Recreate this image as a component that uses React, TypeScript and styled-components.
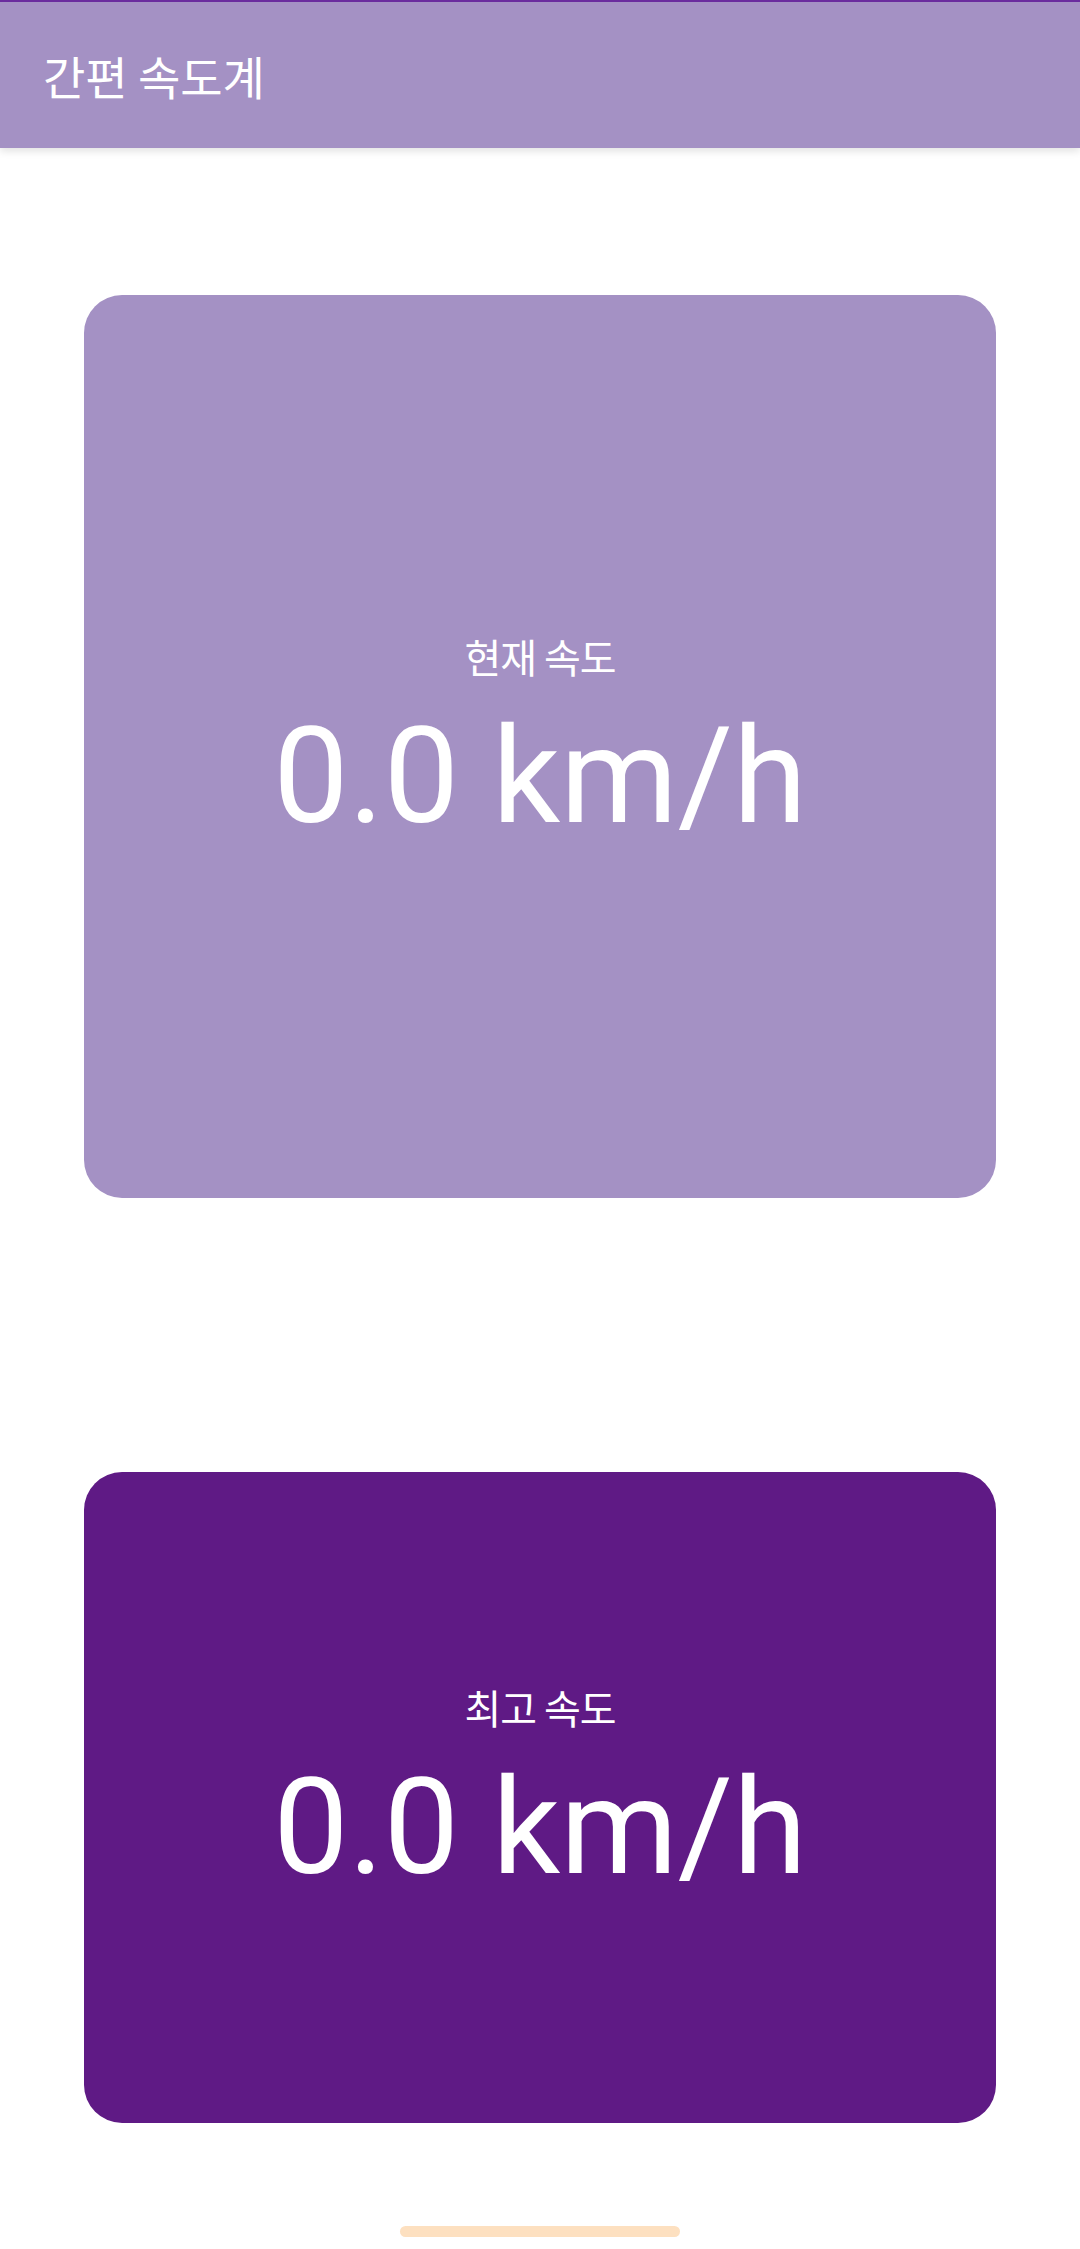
import React from "react";
import styled, { createGlobalStyle } from "styled-components";

const GlobalStyle = createGlobalStyle`
  html, body {
    margin: 0;
    padding: 0;
    background: #ffffff;
  }
  * {
    box-sizing: border-box;
  }
`;

const Screen = styled.div`
  width: 1080px;
  min-height: 2249px;
  display: flex;
  flex-direction: column;
  background: #ffffff;
  font-family: Roboto, "Noto Sans CJK KR", sans-serif;
`;

const AppBar = styled.header`
  height: 148px;
  display: flex;
  align-items: center;
  padding-left: 43px;
  background: #a491c4;
  border-top: 2px solid #6a2c9e;
  box-shadow: 0 3px 8px rgba(0, 0, 0, 0.12);
  position: relative;
  z-index: 1;
`;

const Title = styled.h1`
  margin: 0;
  color: #ffffff;
  font-family: "Noto Sans CJK KR", sans-serif;
  font-weight: 400;
  font-size: 46px;
  letter-spacing: 0;
  line-height: 1;
`;

const Content = styled.main`
  display: flex;
  flex-direction: column;
  gap: 274px;
  padding: 147px 84px 0;
`;

const SpeedCard = styled.section<{ $bg: string; $height: number }>`
  height: ${({ $height }) => $height}px;
  background: ${({ $bg }) => $bg};
  border-radius: 38px;
  display: flex;
  flex-direction: column;
  align-items: center;
  justify-content: center;
  color: #ffffff;
  padding-bottom: 10px;
`;

const Label = styled.div`
  font-family: "Noto Sans CJK KR", sans-serif;
  font-size: 40px;
  letter-spacing: -1px;
  line-height: 48px;
`;

const Value = styled.div`
  font-family: Roboto, sans-serif;
  font-size: 134px;
  line-height: 150px;
  margin-top: 22px;
  white-space: nowrap;
`;

const HomeIndicator = styled.div`
  width: 280px;
  height: 11px;
  border-radius: 6px;
  background: #fde0c0;
  margin: 103px auto 0;
`;

const cards = [
  { label: "현재 속도", value: "0.0 km/h", bg: "#a491c4", height: 903 },
  { label: "최고 속도", value: "0.0 km/h", bg: "#5f1a85", height: 651 },
];

const App: React.FC = () => {
  return (
    <>
      <GlobalStyle />
      <Screen>
        <AppBar>
          <Title>간편 속도계</Title>
        </AppBar>
        <Content>
          {cards.map((c) => (
            <SpeedCard key={c.label} $bg={c.bg} $height={c.height}>
              <Label>{c.label}</Label>
              <Value>{c.value}</Value>
            </SpeedCard>
          ))}
        </Content>
        <HomeIndicator />
      </Screen>
    </>
  );
};

export default App;
